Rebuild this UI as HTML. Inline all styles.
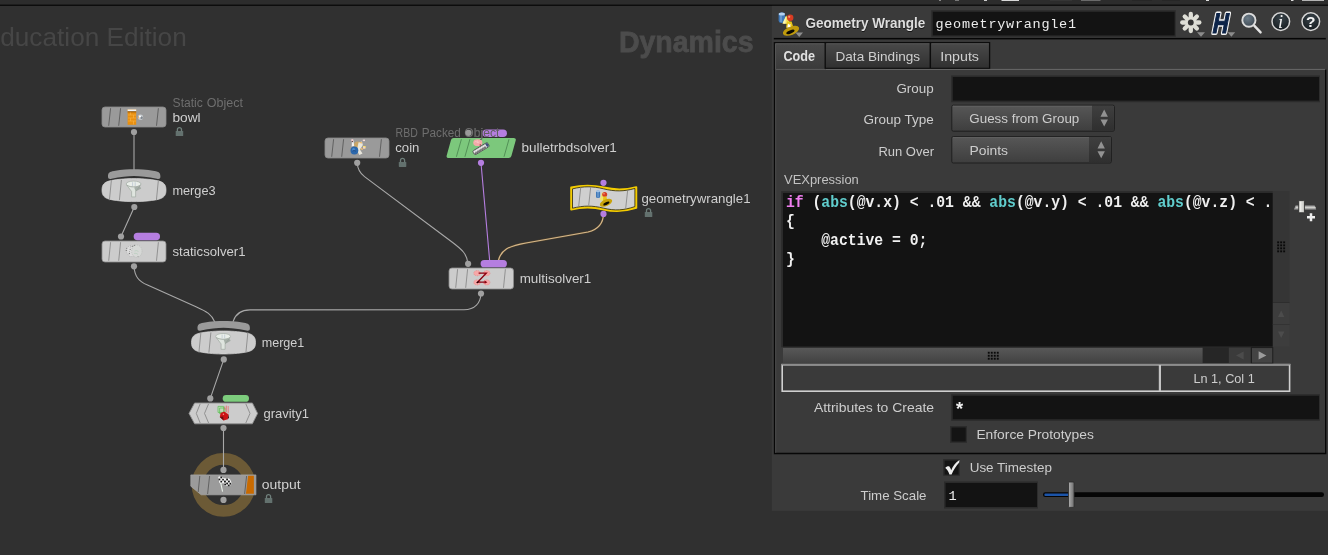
<!DOCTYPE html>
<html lang="en"><head><meta charset="utf-8"><title>Houdini - Dynamics network / Geometry Wrangle</title>
<style>
html,body{margin:0;padding:0;background:#303030;overflow:hidden}
svg{display:block;will-change:transform}
text{white-space:pre}
</style></head><body>
<svg width="1328" height="555" viewBox="0 0 1328 555">
<defs>
<linearGradient id="gbtn" x1="0" y1="0" x2="0" y2="1"><stop offset="0" stop-color="#575757"/><stop offset="1" stop-color="#3e3e3e"/></linearGradient>
<linearGradient id="garr" x1="0" y1="0" x2="0" y2="1"><stop offset="0" stop-color="#3f3f3f"/><stop offset="1" stop-color="#2f2f2f"/></linearGradient>
<linearGradient id="gtab" x1="0" y1="0" x2="0" y2="1"><stop offset="0" stop-color="#4a4a4a"/><stop offset="1" stop-color="#303030"/></linearGradient>
<linearGradient id="gtaba" x1="0" y1="0" x2="0" y2="1"><stop offset="0" stop-color="#4a4a4a"/><stop offset="1" stop-color="#3a3a3a"/></linearGradient>
<linearGradient id="gthumb" x1="0" y1="0" x2="0" y2="1"><stop offset="0" stop-color="#585858"/><stop offset="1" stop-color="#424242"/></linearGradient>
<linearGradient id="ghandle" x1="0" y1="0" x2="1" y2="0"><stop offset="0" stop-color="#b0b0b0"/><stop offset="1" stop-color="#6c6c6c"/></linearGradient>
<radialGradient id="gmag" cx="0.4" cy="0.35" r="0.7"><stop offset="0" stop-color="#6c7c88"/><stop offset="1" stop-color="#3c4650"/></radialGradient>
<radialGradient id="ginfo" cx="0.5" cy="0.3" r="0.8"><stop offset="0" stop-color="#3a444a"/><stop offset="1" stop-color="#10161a"/></radialGradient>
<g id="lock"><rect x="0" y="4" width="7.5" height="5" rx="0.6" fill="#63716e"/><path d="M1.7,4.4 V2.6 a2.05,2.05 0 0 1 4.1,0 V4.4" fill="none" stroke="#6f7f7b" stroke-width="1.3"/></g>
</defs>

<rect x="0" y="0" width="1328" height="555" fill="#303030"/>
<rect x="0" y="0" width="1328" height="4.7" fill="#2c2c2c"/>
<rect x="0" y="4.6" width="1328" height="1.3" fill="#090909"/>
<rect x="1001.5" y="0" width="17.5" height="1" fill="#d8d8d8"/>
<rect x="1050" y="0" width="22" height="1" fill="#353535"/>
<rect x="1081" y="0" width="19.5" height="1" fill="#6a6a6a"/>
<rect x="1132" y="0" width="20" height="1" fill="#262626"/>
<rect x="1162" y="0" width="18" height="1" fill="#262626"/>
<rect x="1206" y="0" width="3" height="1" fill="#ddd"/>
<rect x="1291" y="0" width="2.5" height="1" fill="#ddd"/>
<rect x="1302" y="0" width="22" height="1" fill="#b4b4b4"/>
<rect x="939" y="0" width="2" height="1" fill="#888"/>
<rect x="955" y="0" width="4" height="1" fill="#777"/>
<rect x="984" y="0" width="3" height="1" fill="#ccc"/>
<text x="0.2" y="45.7" font-family='"Liberation Sans", sans-serif' font-size="26.4" fill="#464646" textLength="186.60" lengthAdjust="spacingAndGlyphs">ducation Edition</text>
<text x="618.9" y="51.8" font-family='"Liberation Sans", sans-serif' font-size="30.3" fill="#4c4c4c" font-weight="bold" textLength="134.60" lengthAdjust="spacingAndGlyphs" stroke="#4c4c4c" stroke-width="0.8">Dynamics</text>
<circle cx="223.5" cy="484.9" r="26" fill="none" stroke="#6c5a36" stroke-width="11.6"/>
<path d="M134,132 V170" fill="none" stroke="#a8a8a8" stroke-width="1.1" stroke-linecap="round"/>
<path d="M134.3,207 L121,236.5" fill="none" stroke="#a8a8a8" stroke-width="1.1" stroke-linecap="round"/>
<path d="M134,266 C134.6,277 139,281.3 147.5,285.1 L196,306.7 C207,311.6 211.8,314.5 214.8,322" fill="none" stroke="#a8a8a8" stroke-width="1.1" stroke-linecap="round"/>
<path d="M481,293.5 C480.6,303 475,309.7 464,309.8 L250,309.9 C241,310 235.5,314 233.1,321.5" fill="none" stroke="#a8a8a8" stroke-width="1.1" stroke-linecap="round"/>
<path d="M223.8,359.4 L210.3,398.4" fill="none" stroke="#a8a8a8" stroke-width="1.1" stroke-linecap="round"/>
<path d="M223.5,428 V470" fill="none" stroke="#a8a8a8" stroke-width="1.1" stroke-linecap="round"/>
<path d="M357.2,162.8 C357.6,170 360,173.3 364.5,176.6 L452,242 C462,249.5 467,254 468,263.5" fill="none" stroke="#a8a8a8" stroke-width="1.1" stroke-linecap="round"/>
<path d="M481,163 L489.7,261" fill="none" stroke="#b57ee0" stroke-width="1.1" stroke-linecap="round"/>
<path d="M603.5,214 C603.2,224 598,229.5 588,232 L526,243 C508,246.2 501,250 498.4,260.5" fill="none" stroke="#54452c" stroke-width="1.9" stroke-linecap="round"/>
<path d="M603.5,214 C603.2,224 598,229.5 588,232 L526,243 C508,246.2 501,250 498.4,260.5" fill="none" stroke="#d6b88c" stroke-width="1.15" stroke-linecap="round"/>
<rect x="102" y="107" width="64" height="20" rx="3" fill="#9a9a9a" stroke="#8a8a8a" stroke-width="0.8"/>
<path d="M110.60,108.20 L108.70,125.80" stroke="#5a5a5a" stroke-width="0.9" fill="none"/>
<path d="M120.60,108.20 L118.70,125.80" stroke="#5a5a5a" stroke-width="0.9" fill="none"/>
<path d="M158.40,108.20 L156.50,125.80" stroke="#5a5a5a" stroke-width="0.9" fill="none"/>
<rect x="127.6" y="109.4" width="8.6" height="15.4" fill="#e88f10"/><rect x="127.6" y="109.4" width="8.6" height="2" fill="#eef4fa"/><rect x="127.6" y="111.4" width="8.6" height="0.9" fill="#7a4a10"/>
<path d="M128,115 h8 M128,118 h8 M128,121 h8 M130.5,112.5 v2.5 M133.5,115 v3 M130.5,118 v3 M133.5,121 v3.5" stroke="#f6b040" stroke-width="0.7" fill="none"/>
<circle cx="140.5" cy="117.2" r="2.6" fill="#c9ced2"/><path d="M138.6,115.4 a2.6,2.6 0 0 0 0,3.6 z" fill="#f0a040"/><circle cx="141.6" cy="117.8" r="1.3" fill="#60666e" opacity="0.7"/><circle cx="140" cy="116.4" r="1" fill="#ffffff"/>
<circle cx="134" cy="132" r="3.1" fill="#a0a0a0"/>
<text x="172.6" y="106.9" font-family='"Liberation Sans", sans-serif' font-size="12" fill="#6e6e6e" textLength="30.20" lengthAdjust="spacingAndGlyphs">Static</text>
<text x="206.7" y="106.9" font-family='"Liberation Sans", sans-serif' font-size="12" fill="#6e6e6e" textLength="36.20" lengthAdjust="spacingAndGlyphs">Object</text>
<text x="172.4" y="121.5" font-family='"Liberation Sans", sans-serif' font-size="12.4" fill="#cfcfcf" textLength="28.20" lengthAdjust="spacingAndGlyphs">bowl</text>
<use href="#lock" x="175.7" y="127"/>
<path d="M108,176.4 C108,172.8 109.4,171.8 114,171 C122,169.6 129,169.3 134,169.3 C139,169.3 146,169.6 154.4,171 C159,171.8 160.4,172.8 160.4,176.4 C160.4,178.7 159.1,179.2 156.9,178.7 C148,176.7 140,175.9 134,175.9 C128,175.9 120,176.7 111.5,178.7 C109.3,179.2 108,178.7 108,176.4 Z" fill="#9a9a9a"/>
<path d="M102,190.1 C102,184.9 104,182.2 110,180.79999999999998 C119,178.95 128,178.6 134,178.6 C140,178.6 149,178.95 158,180.79999999999998 C164,182.2 166,184.9 166,190.1  C166,195.29999999999998 164,198.0 158,199.4 C149,201.25 140,201.6 134,201.6 C128,201.6 119,201.25 110,199.4 C104,198.0 102,195.29999999999998 102,190.1  Z" fill="#cccccc" stroke="#d6d6d6" stroke-width="0.7"/>
<path d="M111.40,180.00 L109.40,200.20" stroke="#8a8a8a" stroke-width="0.9" fill="none"/>
<path d="M121.40,180.00 L119.40,200.20" stroke="#8a8a8a" stroke-width="0.9" fill="none"/>
<path d="M158.40,180.00 L156.40,200.20" stroke="#8a8a8a" stroke-width="0.9" fill="none"/>
<ellipse cx="133.6" cy="184" rx="7.4" ry="2.9" fill="#e9eee9" stroke="#a3ada5" stroke-width="0.7"/>
<path d="M126.8,185.2 L131.6,191.5 V196.9 H135.6 V191.5 L140.4,185.2 C136.6,187.6 130.6,187.6 126.8,185.2 Z" fill="#dfe5df" stroke="#98a29a" stroke-width="0.6"/>
<path d="M134.2,187.4 L139.6,186 L141.2,188.4 L135.6,191.6 Z" fill="#8f9a92" opacity="0.7"/>
<path d="M132.6,182.2 v3.8 M135.2,182.2 v3.8" stroke="#b8c4d0" stroke-width="0.9" opacity="0.8"/>
<circle cx="134.3" cy="207" r="3.1" fill="#a0a0a0"/>
<text x="172.4" y="195" font-family='"Liberation Sans", sans-serif' font-size="12.4" fill="#cfcfcf" textLength="43.20" lengthAdjust="spacingAndGlyphs">merge3</text>
<rect x="102" y="241" width="64" height="21" rx="3" fill="#cccccc" stroke="#8e8e8e" stroke-width="0.8"/>
<path d="M110.60,242.20 L108.70,260.80" stroke="#8a8a8a" stroke-width="0.9" fill="none"/>
<path d="M120.60,242.20 L118.70,260.80" stroke="#8a8a8a" stroke-width="0.9" fill="none"/>
<path d="M158.40,242.20 L156.50,260.80" stroke="#8a8a8a" stroke-width="0.9" fill="none"/>
<ellipse cx="131.3" cy="251" rx="4.6" ry="5.6" fill="#dddddd" stroke="#aaaaaa" stroke-width="0.6" stroke-dasharray="1.2 1"/><ellipse cx="136.8" cy="251.2" rx="5.2" ry="6.2" fill="#d6d8d6" stroke="#b2b6b2" stroke-width="0.6" stroke-dasharray="1.2 1"/><path d="M130.5,246.5 l-1.6,8" stroke="#8c8c8c" stroke-width="0.7" stroke-dasharray="1 1.4"/><g fill="#555"><circle cx="126.4" cy="248.2" r="0.45"/><circle cx="126.2" cy="250.4" r="0.5"/><circle cx="132.2" cy="246.4" r="0.5"/><circle cx="134.3" cy="245.3" r="0.5"/><circle cx="130.4" cy="249.6" r="0.45"/><circle cx="129.4" cy="253.4" r="0.5"/><circle cx="138" cy="256.4" r="0.45"/></g><path d="M134.5,251 q2,-1 4,0.4 M134,253.4 q2.4,-0.6 4,1" stroke="#a8c8b0" stroke-width="0.5" fill="none"/>
<circle cx="121" cy="236.5" r="3.1" fill="#a0a0a0"/>
<circle cx="134" cy="266.3" r="3.1" fill="#a0a0a0"/>
<rect x="133.7" y="232.8" width="26.30000000000001" height="7.5" rx="3.75" fill="#b57ee0"/>
<text x="172.4" y="256" font-family='"Liberation Sans", sans-serif' font-size="12.4" fill="#cfcfcf" textLength="73.20" lengthAdjust="spacingAndGlyphs">staticsolver1</text>
<rect x="325" y="138" width="64" height="20" rx="3" fill="#9a9a9a" stroke="#8a8a8a" stroke-width="0.8"/>
<path d="M333.60,139.20 L331.70,156.80" stroke="#5a5a5a" stroke-width="0.9" fill="none"/>
<path d="M343.60,139.20 L341.70,156.80" stroke="#5a5a5a" stroke-width="0.9" fill="none"/>
<path d="M381.40,139.20 L379.50,156.80" stroke="#5a5a5a" stroke-width="0.9" fill="none"/>
<path d="M352,139.6 l1.2,0 l1.1,6.4 l-2.6,0.4 z" fill="#f2f0ee"/><rect x="351.2" y="139.3" width="1.9" height="1.6" fill="#f3c8c8"/><circle cx="352.4" cy="141.6" r="0.6" fill="#502020"/>
<circle cx="357.6" cy="145" r="3.6" fill="#f0b040" opacity="0.55"/>
<path d="M358.5,142.5 l3.4,-1 l1,3.4 l-3,4.6 l2.6,4 l-3.2,1.4 l-2.4,-4.6 z" fill="#e8e6dc"/><path d="M359,142.8 l2.6,-0.8 l0.2,1.6 z" fill="#f4a838"/><path d="M360.3,149.2 l1.6,-1.6 l1.2,2.4 z" fill="#f4c070"/>
<rect x="362.8" y="139.6" width="2.2" height="1.5" fill="#f6dada"/><rect x="363" y="146" width="2.6" height="2.4" fill="#f8e070"/><rect x="363" y="147.2" width="2.2" height="1.4" fill="#f4d0d0"/>
<circle cx="354.4" cy="150.5" r="3.9" fill="#2c68ac"/><circle cx="353.6" cy="149.4" r="1.5" fill="#4a8ad0"/><path d="M352.6,151 q1.5,-1.2 3,0.2" stroke="#16386a" stroke-width="0.7" fill="none"/>
<circle cx="357.2" cy="162.8" r="3.1" fill="#a0a0a0"/>
<text x="395.6" y="136.8" font-family='"Liberation Sans", sans-serif' font-size="12" fill="#6e6e6e" textLength="22.20" lengthAdjust="spacingAndGlyphs">RBD</text>
<text x="421.7" y="136.8" font-family='"Liberation Sans", sans-serif' font-size="12" fill="#6e6e6e" textLength="39.10" lengthAdjust="spacingAndGlyphs">Packed</text>
<text x="464.2" y="136.8" font-family='"Liberation Sans", sans-serif' font-size="12" fill="#6e6e6e" textLength="35.20" lengthAdjust="spacingAndGlyphs">Object</text>
<text x="395.3" y="151.5" font-family='"Liberation Sans", sans-serif' font-size="12.4" fill="#cfcfcf" textLength="24.10" lengthAdjust="spacingAndGlyphs">coin</text>
<use href="#lock" x="398.8" y="157.9"/>
<rect x="482.5" y="129.4" width="24.399999999999977" height="7.5" rx="3.75" fill="#b57ee0"/>
<circle cx="468.5" cy="132.8" r="3.1" fill="#9a9a9a"/>
<path d="M453.6,137.9 H513.8 Q516.4,137.9 515.7,140.4 L511.4,156 Q510.8,158.1 508.6,158.1 H448.6 Q446,158.1 446.7,155.6 L451,140 Q451.6,137.9 453.6,137.9 Z" fill="#7cc87c"/>
<path d="M461.40,139.2 L456.40,156.8" stroke="#4e8a52" stroke-width="0.9"/>
<path d="M469.90,139.2 L464.90,156.8" stroke="#4e8a52" stroke-width="0.9"/>
<path d="M509.00,139.2 L504.00,156.8" stroke="#4e8a52" stroke-width="0.9"/>
<ellipse cx="477.8" cy="142.7" rx="4.6" ry="3.4" fill="#f3a9a9"/><path d="M474.6,142.2 q1.2,-1.6 2.4,0 q1.2,1.4 2.6,-0.4 M476.8,140.4 q1.6,0.4 1.2,2" stroke="#f8d0d0" stroke-width="0.7" fill="none"/><circle cx="480.3" cy="145" r="0.8" fill="#a03040"/>
<g transform="rotate(-31 481 148.6)"><rect x="472.4" y="146.4" width="17.2" height="4.6" rx="1.3" fill="#ececec" stroke="#4a4a4a" stroke-width="0.8"/><rect x="473" y="148.9" width="13" height="1.7" fill="#6e6e6e"/><path d="M475,147 v3 M477,147 v3 M479,147 v3 M481,147 v3 M483,147 v3 M485,147 v3" stroke="#9a9a9a" stroke-width="0.5"/><rect x="487" y="146.8" width="2.2" height="3.6" fill="#3a5078"/></g>
<circle cx="481" cy="162.8" r="3.1" fill="#b57ee0"/>
<text x="464.2" y="136.8" font-family='"Liberation Sans", sans-serif' font-size="12" fill="#606060" textLength="35.20" lengthAdjust="spacingAndGlyphs" clip-path="url(#clipobj)">Object</text>
<text x="521.4" y="151.9" font-family='"Liberation Sans", sans-serif' font-size="12.4" fill="#cfcfcf" textLength="95.50" lengthAdjust="spacingAndGlyphs">bulletrbdsolver1</text>
<circle cx="603.5" cy="182.8" r="3.1" fill="#b57ee0"/>
<circle cx="603.5" cy="213.9" r="3.1" fill="#b57ee0"/>
<path d="M571.15,187.5 C582.877,184.745 591.9979999999999,184.745 603.7249999999999,187.5 C615.452,190.255 624.573,190.255 636.3,187.1 L636.3,207.9 C624.573,211.655 615.452,212.255 603.7249999999999,209.5 C591.9979999999999,206.745 582.877,206.745 571.15,209.5 Z" fill="#f4cc00" stroke="#f4cc00" stroke-width="1.9" stroke-linejoin="round"/>
<path d="M572.5,188.85 C583.732,186.095 592.468,186.095 603.7,188.85 C614.932,191.605 623.668,191.605 634.9,188.45 L634.9,206.6 C623.668,210.355 614.932,210.95499999999998 603.7,208.2 C592.468,205.445 583.732,205.445 572.5,208.2 Z" fill="#cfcfcf" stroke="#2a2408" stroke-width="0.8" stroke-linejoin="round"/>
<path d="M580.7,187.8 L578.7,206.2" stroke="#8a8a8a" stroke-width="0.9"/>
<path d="M590.7,187.0 L588.7,205.4" stroke="#8a8a8a" stroke-width="0.9"/>
<path d="M627.6,190.8 L625.6,209.2" stroke="#8a8a8a" stroke-width="0.9"/>
<rect x="596" y="190.4" width="4.1" height="7.6" rx="1.6" fill="#3f78b8"/><ellipse cx="598" cy="191.2" rx="2" ry="1" fill="#a8c8ea"/><path d="M598,191.5 v6" stroke="#9cc0e4" stroke-width="0.7"/>
<path d="M602.3,191.6 L605.2,201 L599.6,200.2 Z" fill="#f0e46c"/>
<circle cx="604.7" cy="194.5" r="2.5" fill="#d63a20"/><circle cx="604" cy="193.7" r="0.9" fill="#f08060"/>
<path d="M603.4,196.6 l3,0 l1,4.4 l-4.6,0.4 z" fill="#e8c418"/>
<ellipse cx="606" cy="202.7" rx="6.6" ry="3.3" transform="rotate(-24 606 202.7)" fill="#c9a208"/><ellipse cx="606.4" cy="203.5" rx="3.4" ry="1.25" transform="rotate(-24 606.4 203.5)" fill="#0c0a00"/>
<text x="641.4" y="203.0" font-family='"Liberation Sans", sans-serif' font-size="12.4" fill="#cfcfcf" textLength="109.20" lengthAdjust="spacingAndGlyphs">geometrywrangle1</text>
<use href="#lock" x="644.8" y="208"/>
<rect x="449" y="268" width="64.5" height="21" rx="3" fill="#cccccc" stroke="#8e8e8e" stroke-width="0.8"/>
<path d="M457.60,269.20 L455.70,287.80" stroke="#8a8a8a" stroke-width="0.9" fill="none"/>
<path d="M467.60,269.20 L465.70,287.80" stroke="#8a8a8a" stroke-width="0.9" fill="none"/>
<path d="M505.40,269.20 L503.50,287.80" stroke="#8a8a8a" stroke-width="0.9" fill="none"/>
<ellipse cx="477.1" cy="273.2" rx="3.3" ry="2.6" fill="#f6a8a8" stroke="#e07878" stroke-width="0.5" stroke-dasharray="1 0.8"/>
<ellipse cx="486.7" cy="273.2" rx="3.3" ry="2.6" fill="#f6a8a8" stroke="#e07878" stroke-width="0.5" stroke-dasharray="1 0.8"/>
<ellipse cx="477.1" cy="282.4" rx="3.3" ry="2.6" fill="#f6a8a8" stroke="#e07878" stroke-width="0.5" stroke-dasharray="1 0.8"/>
<ellipse cx="486.7" cy="282.4" rx="3.3" ry="2.6" fill="#f6a8a8" stroke="#e07878" stroke-width="0.5" stroke-dasharray="1 0.8"/>
<path d="M478.6,273 H486.4 L477.6,282.2 H485.4" fill="none" stroke="#8a0010" stroke-width="1.25" stroke-linejoin="miter"/><path d="M484.6,280.6 L487.4,282.2 L484.6,283.8 Z" fill="#8a0010"/><path d="M478.6,281.6 L476.8,282.9" stroke="#200000" stroke-width="1.2"/>
<circle cx="468.1" cy="263.8" r="3.1" fill="#a0a0a0"/>
<circle cx="481" cy="293.5" r="3.1" fill="#a0a0a0"/>
<rect x="480.6" y="260" width="26.299999999999955" height="7.300000000000011" rx="3.65" fill="#b57ee0"/>
<text x="519.7" y="282.8" font-family='"Liberation Sans", sans-serif' font-size="12.4" fill="#cfcfcf" textLength="71.60" lengthAdjust="spacingAndGlyphs">multisolver1</text>
<path d="M197.5,328.19999999999993 C197.5,324.59999999999997 198.9,323.59999999999997 203.5,322.79999999999995 C211.5,321.4 218.5,321.09999999999997 223.5,321.09999999999997 C228.5,321.09999999999997 235.5,321.4 243.9,322.79999999999995 C248.5,323.59999999999997 249.9,324.59999999999997 249.9,328.19999999999993 C249.9,330.49999999999994 248.6,330.99999999999994 246.4,330.49999999999994 C237.5,328.49999999999994 229.5,327.69999999999993 223.5,327.69999999999993 C217.5,327.69999999999993 209.5,328.49999999999994 201.0,330.49999999999994 C198.8,330.99999999999994 197.5,330.49999999999994 197.5,328.19999999999993 Z" fill="#9a9a9a"/>
<path d="M191.5,342.5 C191.5,337.3 193.5,334.6 199.5,333.2 C208.5,331.35 217.5,331.0 223.5,331.0 C229.5,331.0 238.5,331.35 247.5,333.2 C253.5,334.6 255.5,337.3 255.5,342.5  C255.5,347.7 253.5,350.4 247.5,351.8 C238.5,353.65 229.5,354.0 223.5,354.0 C217.5,354.0 208.5,353.65 199.5,351.8 C193.5,350.4 191.5,347.7 191.5,342.5  Z" fill="#cccccc" stroke="#d6d6d6" stroke-width="0.7"/>
<path d="M200.90,332.40 L198.90,352.60" stroke="#8a8a8a" stroke-width="0.9" fill="none"/>
<path d="M210.90,332.40 L208.90,352.60" stroke="#8a8a8a" stroke-width="0.9" fill="none"/>
<path d="M247.90,332.40 L245.90,352.60" stroke="#8a8a8a" stroke-width="0.9" fill="none"/>
<ellipse cx="223.1" cy="336.4" rx="7.4" ry="2.9" fill="#e9eee9" stroke="#a3ada5" stroke-width="0.7"/>
<path d="M216.29999999999998,337.59999999999997 L221.1,343.9 V349.29999999999995 H225.1 V343.9 L229.9,337.59999999999997 C226.1,340.0 220.1,340.0 216.29999999999998,337.59999999999997 Z" fill="#dfe5df" stroke="#98a29a" stroke-width="0.6"/>
<path d="M223.7,339.79999999999995 L229.1,338.4 L230.7,340.79999999999995 L225.1,344.0 Z" fill="#8f9a92" opacity="0.7"/>
<path d="M222.1,334.59999999999997 v3.8 M224.7,334.59999999999997 v3.8" stroke="#b8c4d0" stroke-width="0.9" opacity="0.8"/>
<circle cx="223.8" cy="359.4" r="3.1" fill="#a0a0a0"/>
<text x="261.7" y="347.1" font-family='"Liberation Sans", sans-serif' font-size="12.4" fill="#cfcfcf" textLength="42.60" lengthAdjust="spacingAndGlyphs">merge1</text>
<path d="M189,413.4 L194.6,403 H252.4 L257.6,413.4 L252.4,423.8 H194.6 Z" fill="#cccccc" stroke="#8e8e8e" stroke-width="0.9" stroke-linejoin="round"/>
<path d="M200.2,403.8 L196.3,413.4 L200.2,423 M208.6,403.8 L204.5,413.4 L208.6,423 M245.8,403.8 L250,413.4 L245.8,423" fill="none" stroke="#8a8a8a" stroke-width="0.9"/>
<path d="M218,406.4 h5.6 v6 h-5.6 z M219.6,408 h5.4 v5.6 h-5.4 z" fill="#b8e8a8" fill-opacity="0.5" stroke="#58c050" stroke-width="0.7"/>
<path d="M226.4,405.6 v6.8 M228.2,406 v7.4 M224.8,406.4 v4" stroke="#f04848" stroke-width="0.7" opacity="0.8"/>
<path d="M224.2,411.4 L228.6,414.4 L227.8,419.2 L223.6,420.6 L219.8,417 L220.6,413 Z" fill="#cc1414"/><path d="M223.6,420.6 L219.8,417 L223.2,416.6 Z" fill="#6a1010"/><path d="M228.6,414.4 L227.8,419.2 L229,417.6 Z" fill="#300808"/><circle cx="223.4" cy="414.2" r="0.7" fill="#ff9090"/>
<circle cx="210.3" cy="398.4" r="3.1" fill="#a0a0a0"/>
<circle cx="223.5" cy="428" r="3.1" fill="#a0a0a0"/>
<rect x="222.7" y="395" width="26.30000000000001" height="6.800000000000011" rx="3.40" fill="#7ccc7c"/>
<text x="263.4" y="417.5" font-family='"Liberation Sans", sans-serif' font-size="12.4" fill="#cfcfcf" textLength="45.60" lengthAdjust="spacingAndGlyphs">gravity1</text>
<path d="M190.8,474.9 H255.9 V494.8 H201.2 L190.8,486.2 Z" fill="#9b9b9b" stroke="#a9a9a9" stroke-width="0.7" stroke-linejoin="round"/>
<path d="M199.8,476 L198.2,492 M209.6,476 L207.6,494 M246.6,476 L244.6,494" stroke="#5a5a5a" stroke-width="0.9"/>
<path d="M248.1,475.8 H253.9 V493.8 H245.9 Z" fill="#c86a00"/>
<path d="M219.4,476.8 L222.6,491.6" stroke="#e8f0e8" stroke-width="1.1"/>
<path d="M218.2,477 C221,475 224,479.5 227.4,478.3 C229.5,477.5 230.8,479.8 231.8,483.8 C230,486.8 227,486.6 225.2,484.4 C223,481.8 221,484.4 219.4,483 Z" fill="#f2f2f2"/>
<g fill="#1a1a1a"><rect x="220.4" y="476.6" width="1.7" height="1.7"/><rect x="218.6" y="478.6" width="1.7" height="1.7"/><rect x="222.2" y="478.8" width="1.7" height="1.7"/><rect x="220.4" y="480.8" width="1.7" height="1.7"/><rect x="224" y="480.6" width="1.9" height="1.9"/><rect x="226.2" y="478.6" width="1.8" height="1.8"/><rect x="228" y="480.6" width="1.8" height="1.8"/><rect x="226.2" y="482.6" width="1.8" height="1.8"/><rect x="229.6" y="482.8" width="1.6" height="1.8"/><rect x="227.8" y="484.6" width="1.8" height="1.6"/><rect x="224.4" y="483.6" width="1.6" height="1.4"/></g>
<circle cx="223.5" cy="469.9" r="3.1" fill="#a0a0a0"/>
<circle cx="223.5" cy="499.9" r="3.1" fill="#a0a0a0"/>
<text x="261.8" y="488.6" font-family='"Liberation Sans", sans-serif' font-size="12.4" fill="#cfcfcf" textLength="38.80" lengthAdjust="spacingAndGlyphs">output</text>
<use href="#lock" x="264.8" y="494"/>
<rect x="771.8" y="5.9" width="556.2" height="505" fill="#3a3a3a"/>
<g transform="translate(778,12)"><rect x="0.6" y="0.6" width="6.4" height="10.4" rx="2.4" fill="#3f78b8"/><ellipse cx="3.8" cy="1.9" rx="3.1" ry="1.5" fill="#b4d0ee"/><path d="M3,3 v7" stroke="#8cb4e0" stroke-width="1"/><path d="M8.2,3.4 L12.6,12.2 L4.6,11.6 Z" fill="#f2e560"/><path d="M8.2,3.4 L7.4,11.8 L4.6,11.6 Z" fill="#fbf6b8"/><circle cx="12.2" cy="5.8" r="3.2" fill="#d83c22"/><circle cx="11.2" cy="4.8" r="1.1" fill="#f29070"/><path d="M9,9.4 h4.6 l1.6,5.4 l-7.2,1 z" fill="#e8c61a"/><path d="M9.6,13 l1.2,-1.6 l0.6,1.4 l1.6,-0.6 l-0.8,1.6 l1.4,1 l-1.8,0.2 l-0.4,1.8 l-1,-1.6 l-1.8,0.4 l1.2,-1.4 z" fill="#ffffff"/><ellipse cx="13" cy="18.8" rx="8.6" ry="4.2" transform="rotate(-22 13 18.8)" fill="#bf9a0c"/><ellipse cx="12.4" cy="19.9" rx="4.4" ry="1.6" transform="rotate(-22 12.4 19.9)" fill="#090700"/><path d="M17.4,20.6 h7.6 l-3.8,4.4 z" fill="#8e8e8e"/></g>
<text x="805.6" y="29.3" font-family='"Liberation Sans", sans-serif' font-size="14.3" fill="#161616" font-weight="bold" textLength="120.00" lengthAdjust="spacingAndGlyphs">Geometry Wrangle</text>
<text x="805.4" y="28.4" font-family='"Liberation Sans", sans-serif' font-size="14.3" fill="#dedede" font-weight="bold" textLength="120.00" lengthAdjust="spacingAndGlyphs">Geometry Wrangle</text>
<rect x="931.2" y="10.2" width="244.6" height="26.6" fill="#2c2c2c"/><rect x="932.8" y="11.8" width="241.8" height="23.6" fill="#131313"/>
<text x="935.4" y="27.9" font-family='"Liberation Mono", monospace' font-size="13.5" fill="#ececec" textLength="140.60" lengthAdjust="spacing">geometrywrangle1</text>
<g transform="translate(1190.8,22.5)" fill="#deded6"><rect x="-2.15" y="-10.7" width="4.3" height="7.4" rx="2.1" transform="rotate(0)"/><rect x="-2.15" y="-10.7" width="4.3" height="7.4" rx="2.1" transform="rotate(45)"/><rect x="-2.15" y="-10.7" width="4.3" height="7.4" rx="2.1" transform="rotate(90)"/><rect x="-2.15" y="-10.7" width="4.3" height="7.4" rx="2.1" transform="rotate(135)"/><rect x="-2.15" y="-10.7" width="4.3" height="7.4" rx="2.1" transform="rotate(180)"/><rect x="-2.15" y="-10.7" width="4.3" height="7.4" rx="2.1" transform="rotate(225)"/><rect x="-2.15" y="-10.7" width="4.3" height="7.4" rx="2.1" transform="rotate(270)"/><rect x="-2.15" y="-10.7" width="4.3" height="7.4" rx="2.1" transform="rotate(315)"/><circle r="5.7"/><circle r="2.9" fill="#343434"/></g>
<path d="M1197,32.2 h8 l-4,4.6 z" fill="#8c8c8c"/>
<g transform="translate(1211.6,32.5) skewX(-11)"><text x="0" y="0" font-family='"Liberation Sans", sans-serif' font-size="28.4" font-weight="bold" fill="#0c2348" stroke="#f2f2f2" stroke-width="4.2" stroke-linejoin="round" textLength="15.6" lengthAdjust="spacingAndGlyphs">H</text><text x="0" y="0" font-family='"Liberation Sans", sans-serif' font-size="28.4" font-weight="bold" fill="#0c2348" stroke="#0c2348" stroke-width="1.2" textLength="15.6" lengthAdjust="spacingAndGlyphs">H</text></g>
<path d="M1227.6,32.2 h7.6 l-3.8,4.6 z" fill="#8c8c8c"/>
<path d="M1254.2,25.6 L1260.6,32.4" stroke="#e4e4e4" stroke-width="2.4" stroke-linecap="round"/><circle cx="1248.9" cy="20.2" r="6.6" fill="url(#gmag)" stroke="#dcdcdc" stroke-width="1.9"/>
<circle cx="1280.8" cy="21.6" r="8.8" fill="url(#ginfo)" stroke="#d6d6d6" stroke-width="1.5"/>
<text x="1280.6" y="27.6" font-family='"Liberation Serif", serif' font-size="18.5" font-style="italic" fill="#f4f4f4" text-anchor="middle">i</text>
<circle cx="1310.8" cy="21.6" r="8.8" fill="url(#ginfo)" stroke="#d6d6d6" stroke-width="1.5"/>
<text x="1310.8" y="27.2" font-family='"Liberation Sans", sans-serif' font-size="15.5" font-weight="bold" fill="#f4f4f4" text-anchor="middle">?</text>
<rect x="773.8" y="37.9" width="552" height="1.5" fill="#050505"/>
<path d="M774.5,69.6 V453.5 H1325.7 V69.6" fill="none" stroke="#070707" stroke-width="1.3"/>
<rect x="774.4" y="42.6" width="50.8" height="27.4" fill="url(#gtaba)"/>
<path d="M774.4,70 V42.6 H825.2" fill="none" stroke="#0c0c0c" stroke-width="1.3"/><path d="M775.6,69.6 V43.8 H824.6" fill="none" stroke="#595959" stroke-width="0.9"/>
<rect x="825.2" y="42.6" width="105.2" height="25.8" fill="url(#gtab)" stroke="#0c0c0c" stroke-width="1.3"/><path d="M826.4,43.8 H929.6" stroke="#5a5a5a" stroke-width="0.8"/>
<rect x="930.4" y="42.6" width="59.2" height="25.8" fill="url(#gtab)" stroke="#0c0c0c" stroke-width="1.3"/><path d="M931.6,43.8 H988.8" stroke="#5a5a5a" stroke-width="0.8"/>
<rect x="825.8" y="68.9" width="499.4" height="1.1" fill="#636363"/><rect x="775.2" y="68.9" width="50.6" height="1.1" fill="#585858"/><rect x="775.2" y="69.2" width="1" height="383.6" fill="#4a4a4a"/>
<text x="783.4" y="61.3" font-family='"Liberation Sans", sans-serif' font-size="14.2" fill="#e0e0e0" font-weight="bold" textLength="31.60" lengthAdjust="spacingAndGlyphs">Code</text>
<text x="835.5" y="61.3" font-family='"Liberation Sans", sans-serif' font-size="12.6" fill="#cfcfcf" textLength="84.60" lengthAdjust="spacingAndGlyphs">Data Bindings</text>
<text x="940.2" y="61.3" font-family='"Liberation Sans", sans-serif' font-size="12.6" fill="#cfcfcf" textLength="38.80" lengthAdjust="spacingAndGlyphs">Inputs</text>
<text x="896.4" y="92.5" font-family='"Liberation Sans", sans-serif' font-size="12.2" fill="#cdcdcd" textLength="37.30" lengthAdjust="spacingAndGlyphs">Group</text>
<rect x="951.2" y="75.4" width="368.6" height="26.8" fill="#2b2b2b"/><rect x="952.8000000000001" y="77.0" width="366.20000000000005" height="23.6" fill="#131313"/>
<text x="863.4" y="123.5" font-family='"Liberation Sans", sans-serif' font-size="12.2" fill="#cdcdcd" textLength="70.30" lengthAdjust="spacingAndGlyphs">Group Type</text>
<rect x="951.8" y="105.2" width="162.6" height="26" rx="1.5" fill="url(#gbtn)" stroke="#1e1e1e" stroke-width="1"/>
<path d="M1092,105.7 H1112.8999999999999 Q1113.8999999999999,105.7 1113.8999999999999,106.7 V129.7 Q1113.8999999999999,130.7 1112.8999999999999,130.7 H1092 Z" fill="url(#garr)"/>
<path d="M952.8,106.2 H1092" stroke="#666" stroke-width="0.8"/>
<path d="M1100.5,116.8 L1104.2,109.60000000000001 L1107.9,116.8 Z M1100.5,119.60000000000001 L1104.2,126.60000000000001 L1107.9,119.60000000000001 Z" fill="#929292"/>
<text x="969.3" y="122.5" font-family='"Liberation Sans", sans-serif' font-size="12.2" fill="#cdcdcd" textLength="110.00" lengthAdjust="spacingAndGlyphs">Guess from Group</text>
<text x="878.4" y="155.6" font-family='"Liberation Sans", sans-serif' font-size="12.2" fill="#cdcdcd" textLength="55.60" lengthAdjust="spacingAndGlyphs">Run Over</text>
<rect x="951.8" y="136.6" width="159.6" height="26.4" rx="1.5" fill="url(#gbtn)" stroke="#1e1e1e" stroke-width="1"/>
<path d="M1089,137.1 H1109.8999999999999 Q1110.8999999999999,137.1 1110.8999999999999,138.1 V161.5 Q1110.8999999999999,162.5 1109.8999999999999,162.5 H1089 Z" fill="url(#garr)"/>
<path d="M952.8,137.6 H1089" stroke="#666" stroke-width="0.8"/>
<path d="M1097.5,148.39999999999998 L1101.2,141.2 L1104.9,148.39999999999998 Z M1097.5,151.2 L1101.2,158.2 L1104.9,151.2 Z" fill="#929292"/>
<text x="969.4" y="154.9" font-family='"Liberation Sans", sans-serif' font-size="12.2" fill="#cdcdcd" textLength="38.60" lengthAdjust="spacingAndGlyphs">Points</text>
<text x="784" y="183.8" font-family='"Liberation Sans", sans-serif' font-size="12.2" fill="#c2c2c2" textLength="74.80" lengthAdjust="spacingAndGlyphs">VEXpression</text>
<rect x="781.2" y="191.2" width="491.6" height="156" fill="#2b2b2b"/><rect x="783" y="193" width="489.8" height="153.4" fill="#131313"/>
<text x="785.9" y="206.8" font-family='"Liberation Mono", monospace' font-size="15.6" font-weight="bold" textLength="486.48" lengthAdjust="spacingAndGlyphs" clip-path="url(#clipcode)"><tspan fill="#f07ef0">if</tspan><tspan fill="#f0f0f0"> (</tspan><tspan fill="#60cdcd">abs</tspan><tspan fill="#f0f0f0">(@v.x) &lt; .01 &amp;&amp; </tspan><tspan fill="#60cdcd">abs</tspan><tspan fill="#f0f0f0">(@v.y) &lt; .01 &amp;&amp; </tspan><tspan fill="#60cdcd">abs</tspan><tspan fill="#f0f0f0">(@v.z) &lt; .</tspan></text>
<text x="785.9" y="225.8" font-family='"Liberation Mono", monospace' font-size="15.6" font-weight="bold" textLength="8.85" lengthAdjust="spacingAndGlyphs" clip-path="url(#clipcode)"><tspan fill="#f0f0f0">{</tspan></text>
<text x="785.9" y="244.8" font-family='"Liberation Mono", monospace' font-size="15.6" font-weight="bold" textLength="141.52" lengthAdjust="spacingAndGlyphs" clip-path="url(#clipcode)"><tspan fill="#f0f0f0">    @active = 0;</tspan></text>
<text x="785.9" y="263.8" font-family='"Liberation Mono", monospace' font-size="15.6" font-weight="bold" textLength="8.85" lengthAdjust="spacingAndGlyphs" clip-path="url(#clipcode)"><tspan fill="#f0f0f0">}</tspan></text>
<rect x="1272.8" y="191.2" width="16.8" height="111.4" fill="#353535"/><rect x="1272.8" y="302.2" width="16.8" height="1" fill="#2c2c2c"/>
<rect x="1272.8" y="303" width="16.8" height="43.6" fill="#3d3d3d"/><rect x="1272.8" y="324" width="16.8" height="1" fill="#333"/>
<path d="M1278,317 L1281.2,310.4 L1284.4,317 Z" fill="#4c4c4c"/><path d="M1278,331.6 L1281.2,338 L1284.4,331.6 Z" fill="#4c4c4c"/>
<g fill="#0a0a0a"><rect x="1277.2" y="241.4" width="1.9" height="1.9"/><rect x="1277.2" y="244.4" width="1.9" height="1.9"/><rect x="1277.2" y="247.4" width="1.9" height="1.9"/><rect x="1277.2" y="250.4" width="1.9" height="1.9"/><rect x="1280.2" y="241.4" width="1.9" height="1.9"/><rect x="1280.2" y="244.4" width="1.9" height="1.9"/><rect x="1280.2" y="247.4" width="1.9" height="1.9"/><rect x="1280.2" y="250.4" width="1.9" height="1.9"/><rect x="1283.2" y="241.4" width="1.9" height="1.9"/><rect x="1283.2" y="244.4" width="1.9" height="1.9"/><rect x="1283.2" y="247.4" width="1.9" height="1.9"/><rect x="1283.2" y="250.4" width="1.9" height="1.9"/></g>
<rect x="783" y="347.2" width="489.8" height="16.2" fill="#262626"/>
<rect x="783" y="347.8" width="419.6" height="15.2" fill="url(#gthumb)"/>
<g fill="#0a0a0a"><rect x="987.8" y="351.8" width="1.9" height="1.9"/><rect x="987.8" y="354.8" width="1.9" height="1.9"/><rect x="987.8" y="357.8" width="1.9" height="1.9"/><rect x="990.8" y="351.8" width="1.9" height="1.9"/><rect x="990.8" y="354.8" width="1.9" height="1.9"/><rect x="990.8" y="357.8" width="1.9" height="1.9"/><rect x="993.8" y="351.8" width="1.9" height="1.9"/><rect x="993.8" y="354.8" width="1.9" height="1.9"/><rect x="993.8" y="357.8" width="1.9" height="1.9"/><rect x="996.8" y="351.8" width="1.9" height="1.9"/><rect x="996.8" y="354.8" width="1.9" height="1.9"/><rect x="996.8" y="357.8" width="1.9" height="1.9"/></g>
<rect x="1228.8" y="347.6" width="22" height="15.6" fill="#3b3b3b"/><path d="M1243.6,351.4 L1236,355.4 L1243.6,359.4 Z" fill="#4b4b4b"/>
<rect x="1251.4" y="347.6" width="21.4" height="15.6" fill="#444" stroke="#1c1c1c" stroke-width="0.9"/><path d="M1258.6,351.2 L1266.4,355.4 L1258.6,359.6 Z" fill="#9c9c9c"/>
<rect x="782.2" y="364.7" width="507.4" height="26.5" fill="#3a3a3a" stroke="#cfcfcf" stroke-width="1.6"/>
<rect x="781.4" y="363.8" width="509" height="1.4" fill="#8c8c8c"/>
<rect x="1158.8" y="365" width="2.2" height="26" fill="#c4c4c4"/>
<text x="1193.4" y="382.9" font-family='"Liberation Sans", sans-serif' font-size="12.2" fill="#cdcdcd" textLength="61.40" lengthAdjust="spacingAndGlyphs">Ln 1, Col 1</text>
<text x="813.9" y="411.8" font-family='"Liberation Sans", sans-serif' font-size="12.2" fill="#cdcdcd" textLength="120.20" lengthAdjust="spacingAndGlyphs">Attributes to Create</text>
<rect x="951.2" y="394.2" width="368.6" height="26.6" fill="#2b2b2b"/><rect x="952.8000000000001" y="395.8" width="366.20000000000005" height="23.400000000000002" fill="#131313"/>
<text x="953.9" y="414.7" font-family='"Liberation Mono", monospace' font-size="18.5" fill="#f2f2f2" font-weight="bold">*</text>
<rect x="950" y="426" width="17" height="16.8" fill="#2b2b2b"/><rect x="951.5" y="427.5" width="14.2" height="14" fill="#141414"/>
<text x="976.4" y="439" font-family='"Liberation Sans", sans-serif' font-size="12.2" fill="#cdcdcd" textLength="117.40" lengthAdjust="spacingAndGlyphs">Enforce Prototypes</text>
<rect x="943.1" y="459.1" width="16.7" height="16.7" fill="#2b2b2b"/><rect x="944.6" y="460.6" width="14" height="14" fill="#141414"/>
<path d="M945.3,467.9 C946.6,466.3 948.4,466.0 949.4,466.6 C950.2,467.6 950.8,468.8 951.2,470.2 C952.8,466.2 955.6,462.4 959.5,459.9 L959.2,462.4 C956.0,465.8 953.4,470.0 951.6,474.4 L949.4,474.4 C948.6,471.6 947.2,469.4 945.3,467.9 Z" fill="#eeeeee"/>
<text x="969.7" y="471.6" font-family='"Liberation Sans", sans-serif' font-size="12.2" fill="#cdcdcd" textLength="82.20" lengthAdjust="spacingAndGlyphs">Use Timestep</text>
<text x="860.5" y="499.8" font-family='"Liberation Sans", sans-serif' font-size="12.2" fill="#cdcdcd" textLength="66.00" lengthAdjust="spacingAndGlyphs">Time Scale</text>
<rect x="944" y="481.4" width="93.8" height="27.2" fill="#2b2b2b"/><rect x="945.6" y="483.0" width="91.39999999999999" height="24.0" fill="#131313"/>
<text x="948.4" y="499.8" font-family='"Liberation Mono", monospace' font-size="13.7" fill="#ececec">1</text>
<rect x="1043" y="492.3" width="281" height="4.7" rx="2.3" fill="#050505"/><rect x="1044.4" y="493.5" width="25" height="2.5" rx="1" fill="#1c54a8"/>
<rect x="1068.5" y="482" width="5.6" height="25.4" rx="1" fill="url(#ghandle)" stroke="#2a2a2a" stroke-width="0.8"/>
<path d="M1294,209.6 L1295.6,205.5 H1314.6 L1316.2,209.6 Z" fill="#a4a4a4"/><rect x="1296" y="206.8" width="19.6" height="1.3" fill="#cfcfcb"/><rect x="1298.7" y="200.6" width="5.7" height="12.2" rx="0.8" fill="#d6d6d2" stroke="#2c2c2c" stroke-width="0.9"/><rect x="1299.8" y="201.6" width="1.6" height="10.2" fill="#ecece8"/><path d="M1311,213.3 v8 M1307,217.3 h8" stroke="#efefef" stroke-width="2.5"/>
<clipPath id="clipcode"><rect x="783" y="193" width="488.6" height="153"/></clipPath>
<clipPath id="clipobj"><rect x="474" y="125" width="34" height="18"/></clipPath>
</svg>
</body></html>
